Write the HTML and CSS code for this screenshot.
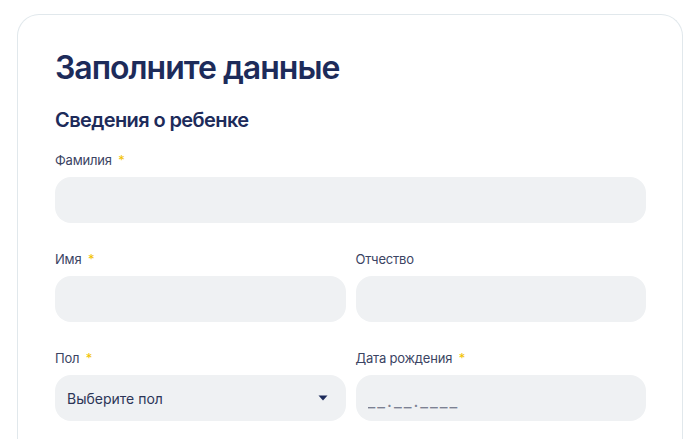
FILE: index.html
```html
<!DOCTYPE html>
<html lang="ru">
<head>
  <meta charset="UTF-8" />
  <meta name="viewport" content="width=device-width, initial-scale=1" />
  <title>Заполните данные</title>
  <link rel="stylesheet" href="styles.css">
</head>
<body>

<div class="card">
  <h1 class="title">Заполните данные</h1>
  <h2 class="subtitle">Сведения о ребенке</h2>

  <form class="form">
    <div class="field full">
      <label for="lastName">Фамилия <span class="req">*</span></label>
      <input type="text" id="lastName" class="input" />
    </div>

    <div class="field">
      <label for="firstName">Имя <span class="req">*</span></label>
      <input type="text" id="firstName" class="input" />
    </div>
    <div class="field">
      <label for="middleName">Отчество</label>
      <input type="text" id="middleName" class="input" />
    </div>

    <div class="field">
      <label for="gender">Пол <span class="req">*</span></label>
      <div class="input select" id="gender">
        <span>Выберите пол</span>
        <svg class="caret" width="10" height="6" viewBox="0 0 10 6"><path d="M0.5 0.5h9L5 5.5z" fill="#1d2b5a"/></svg>
      </div>
    </div>
    <div class="field">
      <label for="birthDate">Дата рождения <span class="req">*</span></label>
      <input type="text" id="birthDate" class="input date" placeholder="__.__.____" />
    </div>
  </form>
</div>

</body>
</html>
```

FILE: styles.css
```css
body { margin: 0; padding: 14px 17px 0; background: #fff; font-family: Inter, "Noto Sans", sans-serif; color: #1d2b5a; }
.card { border: 1px solid #e1e8ec; border-bottom: none; border-radius: 22px 22px 0 0; padding: 33px 36px 18px 37px; }
.title { margin: 0; font-size: 32px; line-height: 40px; font-weight: 600; color: #1d2b5a; letter-spacing: -1px; }
.subtitle { margin: 18px 0 0; font-size: 20px; line-height: 28px; font-weight: 600; color: #1d2b5a; letter-spacing: -0.6px; }
.form { display: grid; grid-template-columns: 1fr 1fr; column-gap: 10px; row-gap: 27px; margin-top: 17px; }
.field { display: flex; flex-direction: column; }
.field.full { grid-column: 1 / 3; }
label { font-size: 13px; line-height: 18px; color: #3b4463; margin-bottom: 8px; letter-spacing: -0.2px; }
.req { color: #f2c200; margin-left: 3px; }
.input { box-sizing: border-box; height: 46px; border: none; border-radius: 16px; background: #eff1f3; padding: 0 12px; font-family: inherit; font-size: 14px; color: #2c3557; outline: none; }
.select { display: flex; align-items: center; justify-content: space-between; padding-right: 18px; }
.date { padding-top: 6px; font-size: 17px; }
.date::placeholder { color: #7c8192; letter-spacing: 2px; }
```
